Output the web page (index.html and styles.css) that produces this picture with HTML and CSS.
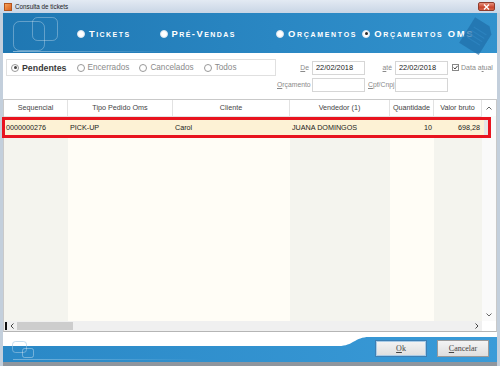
FILE: index.html
```html
<!DOCTYPE html>
<html>
<head>
<meta charset="utf-8">
<title>Consulta de tickets</title>
<link rel="stylesheet" href="styles.css">
</head>
<body>
<div class="window">
  <div class="titlebar">
    <span class="app-icon"></span>
    <span class="title">Consulta de tickets</span>
    <span class="close">
      <svg width="7" height="6" viewBox="0 0 7 6"><path d="M1 0.5 L6 5.5 M6 0.5 L1 5.5" stroke="#fff" stroke-width="1.4"/></svg>
    </span>
  </div>

  <div class="frame">
    <div class="banner">
      <svg class="logo" width="170" height="40" viewBox="0 0 170 40">
        <defs>
          <linearGradient id="fade" x1="0" x2="1" y1="0" y2="0">
            <stop offset="0" stop-color="#fff" stop-opacity="0.45"/>
            <stop offset="1" stop-color="#fff" stop-opacity="0"/>
          </linearGradient>
        </defs>
        <rect x="10.5" y="8.5" width="31" height="29" rx="6" fill="none" stroke="#fff" stroke-opacity="0.3"/>
        <rect x="29.5" y="4.5" width="25" height="23" rx="5" fill="none" stroke="#fff" stroke-opacity="0.3"/>
        <rect x="10" y="38" width="160" height="1" fill="url(#fade)"/>
      </svg>

      <div class="modes">
        <span class="mode m1"><span class="dot"></span>Tickets</span>
        <span class="mode m2"><span class="dot"></span>Pré-Vendas</span>
        <span class="mode m3"><span class="dot"></span>Orçamentos</span>
        <span class="mode m4"><span class="dot on"></span>Orçamentos OMS</span>
      </div>

      <svg class="doc" width="40" height="40" viewBox="0 0 40 40">
        <g transform="rotate(32 20 20)" fill="#1f6da8" fill-opacity="0.7">
          <path d="M9 6 H26 L32 12 V36 H9 Z"/>
        </g>
        <g transform="rotate(32 20 20)" stroke="#2e85c0" stroke-opacity="0.8" stroke-width="1.2">
          <path d="M13 15 H28 M13 19 H28 M13 23 H28 M13 27 H28"/>
        </g>
      </svg>
    </div>

    <div class="content">
      <div class="filters">
        <div class="status">
          <span class="opt sel"><span class="radio on"></span>Pendentes</span>
          <span class="opt"><span class="radio"></span>Encerrados</span>
          <span class="opt"><span class="radio"></span>Cancelados</span>
          <span class="opt"><span class="radio"></span>Todos</span>
        </div>
        <div class="fields">
          <span class="lbl right"><u>D</u>e</span>
          <span class="input">22/02/2018</span>
          <span class="lbl right"><u>a</u>té</span>
          <span class="input">22/02/2018</span>
          <span class="check">
            <svg width="7" height="7" viewBox="0 0 7 7"><rect x="0.5" y="0.5" width="6" height="6" fill="#fff" stroke="#888"/><path d="M1.6 3.5 L3 5 L5.6 1.8" fill="none" stroke="#444" stroke-width="1"/></svg>
            <span>Data a<u>t</u>ual</span>
          </span>
          <span class="lbl right"><u>O</u>rçamento</span>
          <span class="input"></span>
          <span class="lbl"><u>C</u>pf/Cnpj</span>
          <span class="input"></span>
        </div>
      </div>

      <div class="grid">
        <div class="gmain">
          <div class="cols">
            <div class="head">
              <span>Sequencial</span>
              <span>Tipo Pedido Oms</span>
              <span>Cliente</span>
              <span>Vendedor (1)</span>
              <span>Quantidade</span>
              <span>Valor bruto</span>
            </div>
            <div class="body">
              <div class="row selected">
                <span class="first">0000000276</span>
                <span>PICK-UP</span>
                <span>Carol</span>
                <span>JUANA DOMINGOS</span>
                <span class="num">10</span>
                <span class="num">698,28</span>
                <span class="stub"></span>
              </div>
            </div>
          </div>
          <div class="vscroll">
            <span class="arrow top">
              <svg width="6" height="4" viewBox="0 0 6 4"><path d="M0.5 3.5 L3 1 L5.5 3.5" fill="none" stroke="#666"/></svg>
            </span>
            <span class="track"></span>
            <span class="arrow bottom">
              <svg width="6" height="4" viewBox="0 0 6 4"><path d="M0.5 0.5 L3 3 L5.5 0.5" fill="none" stroke="#666"/></svg>
            </span>
          </div>
        </div>
        <div class="hscroll">
          <span class="focus"></span>
          <span class="arrow">
            <svg width="4" height="6" viewBox="0 0 4 6"><path d="M3.5 0.5 L1 3 L3.5 5.5" fill="none" stroke="#444"/></svg>
          </span>
          <span class="thumb"></span>
          <span class="htrack"></span>
          <span class="arrow">
            <svg width="4" height="6" viewBox="0 0 4 6"><path d="M0.5 0.5 L3 3 L0.5 5.5" fill="none" stroke="#444"/></svg>
          </span>
          <span class="corner"></span>
        </div>
      </div>
    </div>

    <div class="footer">
      <svg class="wave" width="494" height="30" viewBox="0 0 494 30">
        <defs>
          <linearGradient id="band" x1="0" x2="1" y1="0" y2="0">
            <stop offset="0" stop-color="#2a88c6"/>
            <stop offset="1" stop-color="#3a9bd8"/>
          </linearGradient>
          <linearGradient id="fade2" x1="0" x2="1" y1="0" y2="0">
            <stop offset="0" stop-color="#fff" stop-opacity="0.35"/>
            <stop offset="1" stop-color="#fff" stop-opacity="0"/>
          </linearGradient>
        </defs>
        <path d="M0 14 H336 C350 14 352 5 366 5 H494 V30 H0 Z" fill="url(#band)"/>
        <rect x="9.5" y="9.5" width="14" height="11" rx="3" fill="none" stroke="#9fc6e2" stroke-opacity="0.6"/>
        <rect x="19.5" y="16.5" width="11" height="9" rx="2" fill="none" stroke="#fff" stroke-opacity="0.35"/>
        <rect x="10" y="27" width="190" height="1" fill="url(#fade2)"/>
      </svg>
      <div class="buttons">
        <span class="btn ok"><u>O</u>k</span>
        <span class="btn"><u>C</u>ancelar</span>
      </div>
    </div>
  </div>
</div>
</body>
</html>
```

FILE: styles.css
```css
html, body { margin: 0; padding: 0; }
body { width: 500px; height: 366px; overflow: hidden; font-family: "Liberation Sans", Arial, sans-serif; background: #c3cfdc; }

.window { width: 500px; height: 366px; display: flex; flex-direction: column; }

/* title bar */
.titlebar { height: 13px; display: flex; align-items: center; background: linear-gradient(#e3eaf3, #c8d5e5); padding: 0 5px 0 4px; }
.app-icon { width: 8px; height: 8px; background: linear-gradient(135deg, #f6a15a, #d9601c); border: 1px solid #b3541c; box-sizing: border-box; margin-right: 3px; }
.title { font-size: 6.3px; color: #1b1b1b; flex: 1; }
.close { width: 17px; height: 9px; border-radius: 2px; border: 1px solid #8e3b2c; background: linear-gradient(#e7917f, #c9452d 60%, #d5644b); display: flex; align-items: center; justify-content: center; box-sizing: border-box; }

.frame { flex: 1; margin: 0 3px; display: flex; flex-direction: column; border-bottom: 4px solid #8f969e; }

/* banner */
.banner { height: 40px; position: relative; background: linear-gradient(to right, #1f77b2, #2a87c3 55%, #3292cd); }
.logo { position: absolute; left: 0; top: 0; }
.doc { position: absolute; right: 0; top: 2px; }
.modes { position: relative; display: flex; align-items: center; height: 100%; padding-left: 74px; padding-top: 1px; box-sizing: border-box; color: #fff; font-size: 9.4px; font-weight: bold; font-variant: small-caps; letter-spacing: 1.45px; }
.mode { display: flex; align-items: center; white-space: nowrap; }
.m2 { margin-left: 29px; }
.m3 { margin-left: 40px; letter-spacing: 1.7px; }
.m4 { margin-left: 5px; letter-spacing: 1.7px; }
.dot { width: 6px; height: 6px; border-radius: 50%; background: #fff; border: 1px solid #d8e4ee; margin-right: 4px; position: relative; }
.dot.on::after { content: ""; position: absolute; left: 1.5px; top: 1.5px; width: 3px; height: 3px; border-radius: 50%; background: #2a2a2a; }

/* content */
.content { background: #fff; display: flex; flex-direction: column; flex: 1; }
.filters { height: 46px; display: flex; align-items: flex-start; padding-top: 6px; box-sizing: border-box; }
.status { width: 270px; flex: none; height: 17px; margin-left: 3px; border: 1px solid #e0e0e0; box-sizing: border-box; display: flex; align-items: center; gap: 10px; padding-left: 4px; font-size: 8.2px; color: #8a8a8a; }
.opt { display: flex; align-items: center; }
.opt.sel { color: #3a3a3a; font-weight: bold; font-size: 8.8px; }
.radio { width: 6px; height: 6px; border-radius: 50%; border: 1px solid #999; margin-right: 3px; position: relative; background: #fff; }
.radio.on::after { content: ""; position: absolute; left: 1.5px; top: 1.5px; width: 3px; height: 3px; border-radius: 50%; background: #444; }

.fields { margin-left: 1px; margin-top: 1px; display: grid; grid-template-columns: 32px 53px 24px 53px auto; grid-auto-rows: 15px; row-gap: 2px; column-gap: 3px; align-items: center; font-size: 6.8px; color: #8a8a8a; white-space: nowrap; }
.lbl.right { text-align: right; }
.input { height: 14px; border: 1px solid #d6d6d6; box-sizing: border-box; display: flex; align-items: center; padding-left: 3px; color: #222; font-size: 7.4px; background: #fff; }
.check { display: flex; align-items: center; gap: 2px; font-size: 7px; margin-left: 1px; }

/* data grid */
.grid { height: 233px; border: 1px solid #c9c9c9; border-bottom-color: #b5b5b5; display: flex; flex-direction: column; box-sizing: border-box; }
.gmain { flex: 1; display: flex; }
.cols { width: 478px; display: flex; flex-direction: column; }
.head { height: 16px; display: grid; grid-template-columns: 64px 105px 117px 100px 44px 48px; border-bottom: 1px solid #e4e4e4; background: #fff; }
.head span { border-right: 1px solid #e2e2e2; font-size: 7.2px; color: #444; text-align: center; line-height: 16px; }
.body { flex: 1; background: linear-gradient(to right, #f4f4ee 0 64px, #fffdf6 64px 286px, #f4f4ee 286px 386px, #fffdf6 386px 430px, #f4f4ee 430px 478px); }
.row { display: grid; grid-template-columns: 63px 105px 117px 100px 44px 48px 1fr; height: 21px; width: 489px; box-sizing: border-box; margin-left: -2px; border: 3px solid #e8141f; background: #fdf2d5; font-size: 7.2px; color: #222; align-items: center; position: relative; z-index: 1; }
.row span { padding-left: 2px; white-space: nowrap; }
.row .first { padding-left: 1px; }
.row .num { text-align: right; padding: 0 2px 0 0; }
.row .stub { align-self: stretch; background: #e6e6e6; margin-left: 2px; padding: 0; }

.vscroll { width: 14px; display: flex; flex-direction: column; background: #fafafa; }
.vscroll .arrow { display: flex; align-items: center; justify-content: center; }
.vscroll .top { height: 16px; background: #fff; }
.vscroll .track { flex: 1; }
.vscroll .bottom { height: 12px; }

.hscroll { height: 10px; display: flex; align-items: center; background: #f0f0f0; }
.hscroll .focus { width: 2px; height: 8px; background: #111; margin-left: 1px; }
.hscroll .arrow { width: 10px; display: flex; justify-content: center; }
.hscroll .thumb { width: 56px; height: 8px; background: #cdcdcd; }
.hscroll .htrack { flex: 1; }
.hscroll .corner { width: 14px; height: 10px; background: #fff; }

/* footer */
.footer { height: 30px; position: relative; background: #fff; }
.wave { position: absolute; left: 0; top: 0; }
.buttons { position: relative; display: flex; justify-content: flex-end; gap: 10px; padding: 8px 8px 0 0; }
.btn { width: 52px; height: 17px; box-sizing: border-box; border: 1px solid #9a9a9a; background: linear-gradient(#f4f4f4, #dedede); display: flex; align-items: center; justify-content: center; font-family: "Liberation Serif", serif; font-size: 8px; color: #444; }
.btn.ok { border-color: #3d7fb3; box-shadow: inset 0 0 0 1px #a9cbe6; }
```
